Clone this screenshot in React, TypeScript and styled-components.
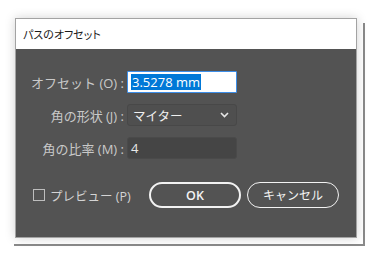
import React from 'react';
import styled, { createGlobalStyle } from 'styled-components';

const Global = createGlobalStyle`
  html {
    background: #ffffff;
  }
  body {
    margin: 0;
    padding: 0;
    font-family: "Open Sans", "Noto Sans CJK JP", sans-serif;
  }
`;

const Page = styled.div`
  width: 377px;
  height: 263px;
  padding: 18px 0 0 15px;
  box-sizing: border-box;
  overflow: hidden;
`;

const Window = styled.div`
  position: relative;
  width: 340px;
  border: 1px solid #a3a3a3;
  box-shadow: 0 0 10px rgba(0, 0, 0, 0.18);

  &::after {
    content: '';
    position: absolute;
    top: 4px;
    left: -2px;
    right: -9px;
    bottom: -9px;
    border-right: 2px solid #8a8a8a;
    border-bottom: 2px solid #8a8a8a;
    filter: blur(0.6px);
    z-index: -1;
  }
`;

const TitleBar = styled.div`
  height: 30px;
  background: #ffffff;
  display: flex;
  align-items: center;
  padding-left: 7px;
  font-family: "Noto Sans CJK JP", sans-serif;
  font-feature-settings: 'palt';
  font-size: 11px;
  color: #1a1a1a;
`;

const Body = styled.div`
  height: 188px;
  background: #535353;
  box-sizing: border-box;
  padding: 22px 0 0 0;
`;

const Form = styled.div`
  display: grid;
  grid-template-columns: 108px 110px;
  column-gap: 3px;
  row-gap: 11px;
`;

const Label = styled.div`
  height: 22px;
  display: flex;
  align-items: center;
  justify-content: flex-end;
  font-size: 13px;
  color: #c9c9c9;
  white-space: nowrap;
`;

const Field = styled.div<{ $variant: 'active' | 'select' | 'plain' }>`
  height: 22px;
  box-sizing: border-box;
  border-radius: ${({ $variant }) => ($variant === 'active' ? '1px' : '3px')};
  border: 1px solid
    ${({ $variant }) =>
      $variant === 'active' ? '#3d8ee8' : $variant === 'select' ? '#484848' : '#4a4a4a'};
  background: ${({ $variant }) =>
    $variant === 'active' ? '#ffffff' : $variant === 'select' ? '#4f4f4f' : '#454545'};
  display: flex;
  align-items: center;
  padding: 0 7px 0 3px;
  font-size: 13px;
  color: #e8e8e8;
`;

const Selected = styled.span`
  background: #0078d7;
  color: #ffffff;
  line-height: 16px;
  padding: 0 1px;
`;

const SelectText = styled.span`
  flex: 1;
  font-size: 12.5px;
  color: #f0f0f0;
  padding-left: 2px;
`;

const Footer = styled.div`
  display: flex;
  align-items: center;
  margin-top: 23px;
  padding-left: 17px;
`;

const Preview = styled.label`
  width: 116px;
  display: flex;
  align-items: center;
  gap: 5px;
  font-size: 12.5px;
  color: #d4d4d4;
  white-space: nowrap;
`;

const Box = styled.span`
  flex: none;
  width: 10px;
  height: 10px;
  border: 1px solid #bdbdbd;
`;

const Button = styled.button`
  width: 92px;
  height: 26px;
  margin-right: 6px;
  border-radius: 13px;
  border: 2px solid #f2f2f2;
  background: transparent;
  color: #f4f4f4;
  font-family: "Open Sans", "Noto Sans CJK JP", sans-serif;
  font-size: 12.5px;
  font-weight: 600;
  padding: 0;
`;

const CancelButton = styled(Button)`
  font-weight: 400;
  font-size: 12px;
  border-width: 1.5px;
`;

function Chevron() {
  return (
    <svg width="9" height="6" viewBox="0 0 9 6">
      <polyline points="1,1 4.5,4.5 8,1" fill="none" stroke="#e6e6e6" strokeWidth="1.6" />
    </svg>
  );
}

export default function App() {
  return (
    <Page>
      <Global />
      <Window>
        <TitleBar>パスのオフセット</TitleBar>
        <Body>
          <Form>
            <Label>オフセット (O) :</Label>
            <Field $variant="active">
              <Selected>3.5278 mm</Selected>
            </Field>
            <Label>角の形状 (J) :</Label>
            <Field $variant="select">
              <SelectText>マイター</SelectText>
              <Chevron />
            </Field>
            <Label>角の比率 (M) :</Label>
            <Field $variant="plain">4</Field>
          </Form>
          <Footer>
            <Preview>
              <Box />
              プレビュー (P)
            </Preview>
            <Button>OK</Button>
            <CancelButton>キャンセル</CancelButton>
          </Footer>
        </Body>
      </Window>
    </Page>
  );
}
